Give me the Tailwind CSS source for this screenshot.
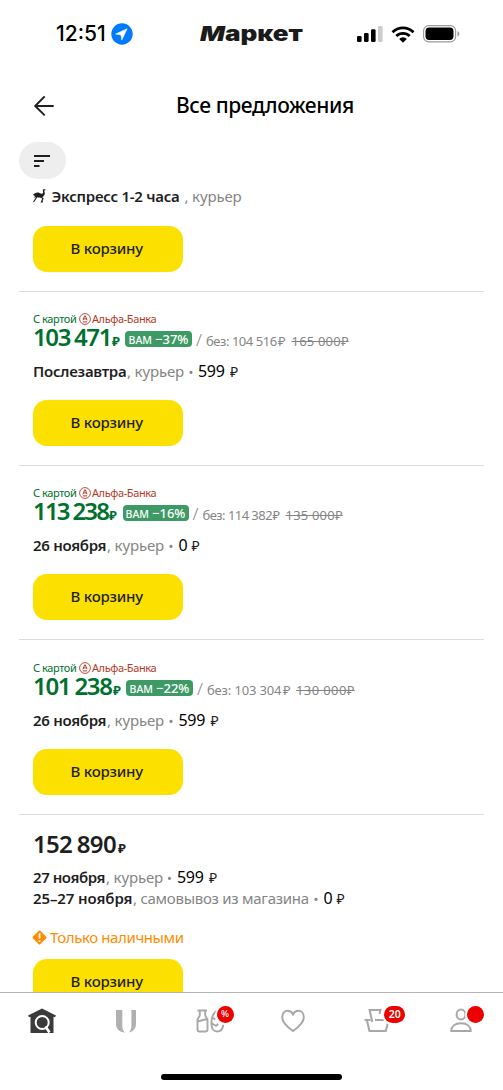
<!DOCTYPE html>
<html lang="ru">
<head>
<meta charset="utf-8">
<title>Все предложения</title>
<script src="https://cdn.jsdelivr.net/npm/@tailwindcss/browser@4"></script>
</head>
<body class="bg-white">
<svg class="hidden">
  <symbol id="alfa" viewBox="0 0 12 12"><circle cx="6" cy="6" r="5.4" fill="none" stroke="#b23a28" stroke-width=".9"/><path d="M4 7.3 5.6 2.9h.8L8 7.3M4.6 5.9h2.8M3.8 8.9h4.4" fill="none" stroke="#b23a28" stroke-width="1"/></symbol>
</svg>
<div class="flex h-[1090px] w-[503px] flex-col overflow-hidden bg-white font-['Noto_Sans',sans-serif] whitespace-nowrap text-[#1f1f1f]">

  <!-- Status bar -->
  <header class="flex h-[68px] shrink-0 items-center text-black">
    <div class="flex w-[200px] items-center pl-14">
      <span class="w-[55px] font-['Inter',sans-serif] text-[21px] font-medium">12:51</span>
      <svg class="size-[22px]" viewBox="0 0 22 22"><circle cx="11" cy="11" r="10.7" fill="#007aff"/><path d="M16.1 5.8 4.7 11l5.3.9.8 5.2z" fill="#fff" stroke="#fff" stroke-linejoin="round" stroke-width=".6"/></svg>
    </div>
    <div class="w-[157px]"><span class="inline-block origin-left scale-x-[1.27] font-['Inter',sans-serif] text-[20.5px] font-black text-[#1b1b1b]"><i>М</i>аркет</span></div>
    <div class="flex items-center">
      <svg class="mr-2 h-4 w-[26px]" viewBox="0 0 26 16"><rect x="0" y="10" width="4.6" height="6" rx="1.3"/><rect x="7" y="7" width="4.6" height="9" rx="1.3"/><rect x="14" y="3.3" width="4.6" height="12.7" rx="1.3"/><rect x="21" y="0" width="4.6" height="16" rx="1.3" fill="#ccc"/></svg>
      <svg class="mr-2 h-[17px] w-6" viewBox="0 0 24 17"><g fill="none" stroke="#000" stroke-width="2.8"><path d="M1.5 6.2a15 15 0 0 1 21 0"/><path d="M5.3 10a9.6 9.6 0 0 1 13.4 0"/></g><path d="M8.2 12.9a5.4 5.4 0 0 1 7.6 0L12 16.8z"/></svg>
      <svg class="h-[18px] w-[37px]" viewBox="0 0 37 18"><rect x=".6" y=".6" width="32" height="16.3" rx="5.2" fill="none" stroke="#999" stroke-width="1.1"/><rect x="2.5" y="2.6" width="28" height="12.3" rx="3.6"/><path d="M34.5 6v5.4c1-.4 1.8-1.4 1.8-2.7S35.5 6.4 34.5 6z" fill="#999"/></svg>
    </div>
  </header>

  <!-- Title bar -->
  <div class="flex h-[74px] shrink-0 items-center pt-0.5 pl-[33px]">
    <svg class="size-[22px]" viewBox="0 0 22 22" fill="none" stroke="#1f1f1f" stroke-width="1.9"><path d="M11.7 1.3 2.200 11l9.500 9.400M2 11h18.700" stroke-linejoin="round"/></svg>
    <h1 class="w-[400px] pl-[121px] text-[21px] font-medium tracking-[-0.4px] text-black">Все предложения</h1>
  </div>
  <div class="flex h-[37px] shrink-0 pl-[18.5px]">
    <button class="flex h-[37px] w-[47px] items-center justify-center rounded-full bg-[#eee]"><svg class="h-3 w-4" viewBox="0 0 16 12" fill="#1f1f1f"><rect y="0" width="16" height="2"/><rect y="5" width="10" height="2"/><rect y="10" width="5.5" height="2"/></svg></button>
  </div>

  <main class="flex min-h-0 grow flex-col overflow-hidden px-[19px]">
    <section class="h-[113px] shrink-0 border-b border-[#dcdcdc] px-3.5 pt-[7px]">
      <div class="flex h-5 items-center text-[15px]">
        <svg class="mr-[5px] h-[14px] w-[13.5px]" viewBox="0 0 27 28" fill="#1f1f1f"><path d="M0 12c3-4 8-6 13-4 3 1.500 6 2 7 0 1-2-.5-3-.5-5.500C19.500.500 22 0 23.500.700L26 2l-3.500 1c0 2 1.500 3.500 1 7-1 4-4 6.500-8 7-3 .5-6 0-8-1l-6 1.500 3-3-4-.5 3-1.500z"/><path d="m8 15-3 5-4 6M14 15l6 4-3 7h3" fill="none" stroke="#1f1f1f" stroke-width="2.4"/></svg>
        <b class="w-[133px] font-semibold tracking-[-0.28px]">Экспресс 1-2 часа</b><span class="tracking-[-0.15px] text-[#858585]">, курьер</span>
      </div>
      <button class="mt-[20px] flex h-[46px] w-[149.5px] items-center justify-center rounded-[14px] bg-[#fce000] pr-0.5 pb-0.5 text-[15px] font-medium tracking-[-0.2px]">В корзину</button>
    </section>

    <section class="h-[174px] shrink-0 border-b border-[#dcdcdc] px-3.5 pt-5">
      <div class="flex h-3.5 items-center text-[11px] tracking-[-0.4px]"><span class="w-[46px] text-[#00702e]">С картой</span><svg class="mr-px size-3"><use href="#alfa"/></svg><span class="text-[#b23a28]">Альфа-Банка</span></div>
      <div class="-mt-px flex h-6 items-baseline leading-6">
        <b class="w-[79px] text-[24px] font-semibold tracking-[-1.4px] [word-spacing:-0.8px] text-[#00702e]">103 471</b><b class="w-[13px] text-[13px] font-bold text-[#00702e]">₽</b>
        <span class="flex h-4 w-[67px] -translate-y-0.5 items-baseline justify-center gap-[3px] rounded bg-[#3d9a65] text-[13px] leading-4 font-medium text-white"><span class="text-[10.5px]">ВАМ</span>−37%</span>
        <span class="w-3.5 pl-1 text-[17px] font-light text-[#858585]">/</span><span class="w-[72px] text-[13px] tracking-[-0.45px] text-[#858585]">без: 104 516</span><span class="w-[13.5px] text-[13px] text-[#858585]">₽</span><s class="text-[13px] tracking-[0.2px] text-[#858585]">165 000₽</s>
      </div>
      <div class="mt-3 flex h-5 items-baseline text-[15px] leading-5"><b class="w-[94px] font-semibold tracking-[-0.25px]">Послезавтра</b><span class="w-[61.5px] tracking-[-0.15px] text-[#858585]">, курьер</span><span class="w-[9.5px] text-[13px] text-[#858585]">•</span><span class="w-[32px] text-[16px] tracking-[-0.3px] text-black">599</span><span class="text-[14px]">₽</span></div>
      <button class="mt-[19px] flex h-[46px] w-[149.5px] items-center justify-center rounded-[14px] bg-[#fce000] pr-0.5 pb-0.5 text-[15px] font-medium tracking-[-0.2px]">В корзину</button>
    </section>

    <section class="h-[174px] shrink-0 border-b border-[#dcdcdc] px-3.5 pt-5">
      <div class="flex h-3.5 items-center text-[11px] tracking-[-0.4px]"><span class="w-[46px] text-[#00702e]">С картой</span><svg class="mr-px size-3"><use href="#alfa"/></svg><span class="text-[#b23a28]">Альфа-Банка</span></div>
      <div class="-mt-px flex h-6 items-baseline leading-6">
        <b class="w-[76px] text-[24px] font-semibold tracking-[-1.8px] [word-spacing:-0.8px] text-[#00702e]">113 238</b><b class="w-[13.5px] text-[13px] font-bold text-[#00702e]">₽</b>
        <span class="flex h-4 w-[66px] -translate-y-0.5 items-baseline justify-center gap-[3px] rounded bg-[#3d9a65] text-[13px] leading-4 font-medium text-white"><span class="text-[10.5px]">ВАМ</span>−16%</span>
        <span class="w-3.5 pl-1 text-[17px] font-light text-[#858585]">/</span><span class="w-[70px] text-[13px] tracking-[-0.55px] text-[#858585]">без: 114 382</span><span class="w-[13px] text-[13px] text-[#858585]">₽</span><s class="text-[13px] tracking-[0.2px] text-[#858585]">135 000₽</s>
      </div>
      <div class="mt-3 flex h-5 items-baseline text-[15px] leading-5"><b class="w-[74px] font-semibold tracking-[-0.3px]">26 ноября</b><span class="w-[61.5px] tracking-[-0.15px] text-[#858585]">, курьер</span><span class="w-[10px] text-[13px] text-[#858585]">•</span><span class="w-[13px] text-[16px] text-black">0</span><span class="text-[14px]">₽</span></div>
      <button class="mt-[19px] flex h-[46px] w-[149.5px] items-center justify-center rounded-[14px] bg-[#fce000] pr-0.5 pb-0.5 text-[15px] font-medium tracking-[-0.2px]">В корзину</button>
    </section>

    <section class="h-[175px] shrink-0 border-b border-[#dcdcdc] px-3.5 pt-[21px]">
      <div class="flex h-3.5 items-center text-[11px] tracking-[-0.4px]"><span class="w-[46px] text-[#00702e]">С картой</span><svg class="mr-px size-3"><use href="#alfa"/></svg><span class="text-[#b23a28]">Альфа-Банка</span></div>
      <div class="-mt-px flex h-6 items-baseline leading-6">
        <b class="w-[80px] text-[24px] font-semibold tracking-[-1.3px] [word-spacing:-0.8px] text-[#00702e]">101 238</b><b class="w-[13px] text-[13px] font-bold text-[#00702e]">₽</b>
        <span class="flex h-4 w-[67px] -translate-y-0.5 items-baseline justify-center gap-[3px] rounded bg-[#3d9a65] text-[13px] leading-4 font-medium text-white"><span class="text-[10.5px]">ВАМ</span>−22%</span>
        <span class="w-3.5 pl-1 text-[17px] font-light text-[#858585]">/</span><span class="w-[76px] text-[13px] tracking-[-0.15px] text-[#858585]">без: 103 304</span><span class="w-[13px] text-[13px] text-[#858585]">₽</span><s class="text-[13px] tracking-[0.4px] text-[#858585]">130 000₽</s>
      </div>
      <div class="mt-3 flex h-5 items-baseline text-[15px] leading-5"><b class="w-[74px] font-semibold tracking-[-0.3px]">26 ноября</b><span class="w-[61.5px] tracking-[-0.15px] text-[#858585]">, курьер</span><span class="w-[10px] text-[13px] text-[#858585]">•</span><span class="w-[32px] text-[16px] tracking-[-0.3px] text-black">599</span><span class="text-[14px]">₽</span></div>
      <button class="mt-[19px] flex h-[46px] w-[149.5px] items-center justify-center rounded-[14px] bg-[#fce000] pr-0.5 pb-0.5 text-[15px] font-medium tracking-[-0.2px]">В корзину</button>
    </section>

    <section class="shrink-0 px-3.5 pt-[17px]">
      <div class="flex h-6 items-baseline leading-6"><b class="w-[85px] text-[24px] font-semibold tracking-[-0.7px] [word-spacing:-0.8px]">152 890</b><b class="text-[13px]">₽</b></div>
      <div class="mt-[11px] flex h-[21px] items-baseline text-[15px] leading-[21px]"><b class="w-[73px] font-semibold tracking-[-0.45px]">27 ноября</b><span class="w-[61px] tracking-[-0.15px] text-[#858585]">, курьер</span><span class="w-[10px] text-[13px] text-[#858585]">•</span><span class="w-[32px] text-[16px] tracking-[-0.3px] text-black">599</span><span class="text-[14px]">₽</span></div>
      <div class="flex h-[21px] items-baseline text-[15px] leading-[21px]"><b class="w-[100px] font-semibold tracking-[-0.1px]">25–27 ноября</b><span class="w-[180.5px] tracking-[-0.27px] text-[#858585]">, самовывоз из магазина</span><span class="w-[10px] text-[13px] text-[#858585]">•</span><span class="w-[13px] text-[16px] text-black">0</span><span class="text-[14px]">₽</span></div>
      <div class="mt-[18px] flex h-5 items-center text-[15px] text-[#ff8c00]"><svg class="mr-[3px] -ml-px size-[15px]" viewBox="0 0 14 14"><rect x="2.1" y="2.1" width="9.8" height="9.8" rx="1" transform="rotate(45 7 7)" fill="#ff8c00"/><path d="M7 3v5M7 9.500v1.700" stroke="#fff" stroke-width="1.700"/></svg><span class="tracking-[-0.4px]">Только наличными</span></div>
      <button class="mt-3 flex h-[46px] w-[149.5px] items-center justify-center rounded-[14px] bg-[#fce000] pr-0.5 pb-0.5 text-[15px] font-medium tracking-[-0.2px]">В корзину</button>
    </section>
  </main>

  <!-- Tab bar -->
  <nav class="flex h-[98px] shrink-0 flex-col items-center justify-between border-t border-[#b5b5b5] bg-white pb-[10px]">
    <div class="grid h-[56px] w-full grid-cols-6 place-items-center">
      <svg class="h-[26px] w-7" viewBox="0 0 28 26"><path d="M14 .5 28 7.500l-1 1.700-1.500-.5V25h-23V8.700L1 9.200 0 7.500z" fill="#3b3b3b"/><circle cx="14.200" cy="14.500" r="6.500" fill="none" stroke="#fff" stroke-width="2"/><path d="m17.500 18.500 4 6" stroke="#fff" stroke-width="2.600"/></svg>
      <svg class="h-[26px] w-5" viewBox="0 0 20 26" fill="#b0b0b0"><path d="M0 2h6.300v15c0 3.300.5 5.500 2.500 7.500C3.500 24.300 0 21 0 15.500zM20 2h-4.600v15c0 3.300-.6 5.500-2.600 7.500 4.700-.8 7.200-4 7.200-9z"/></svg>
      <div class="relative h-[26px] w-7">
        <svg class="h-[26px] w-7" viewBox="0 0 28 26" fill="none" stroke="#a8a8a8" stroke-width="1.900"><path d="M1.500 2.500h9.500M3.800 3v4.500L1.500 11.500v10q0 2 2 2h6q2 0 2-2v-10L9.200 7.500V3M1.500 13.500l9.500-2.500"/><path d="M20 3c-3.800 4-4.900 8-4.600 13 .2 5 2.600 7.500 5.900 7.500s5.500-2.500 6-7M15.300 9l4 2.500M15.300 15l4 2.500m3-1.500-3 2.500"/></svg>
        <span class="absolute -top-0.5 left-[21px] flex size-[17px] items-center justify-center rounded-full bg-[#ec0000] text-[9.5px] font-medium text-white ring-2 ring-white">%</span>
      </div>
      <svg class="h-[26px] w-6" viewBox="0 0 24 26" fill="none" stroke="#a8a8a8" stroke-width="2"><path d="M12 23C7 19.500 1.200 14.800 1.200 9.200c0-3.600 2.200-6.400 5.400-6.400 2.400 0 4.200 1.200 5.400 3.500 1.200-2.300 3-3.500 5.400-3.500 3.200 0 5.400 2.800 5.400 6.400 0 5.600-5.800 10.300-10.800 13.800z"/></svg>
      <div class="relative h-[26px] w-7">
        <svg class="h-[26px] w-7" viewBox="0 0 28 26" fill="none" stroke="#a8a8a8" stroke-width="2"><path d="M1.500 12h6M12 12h15M4 12.500 6.400 23h16.400L25 14.500M9.300 14 6.600 2h10.900l-1 4"/></svg>
        <span class="absolute -top-0.5 left-[21px] flex h-[17px] w-[21px] items-center justify-center rounded-full bg-[#ec0000] text-[10.5px] font-semibold text-white ring-2 ring-white">20</span>
      </div>
      <div class="relative h-[26px] w-7">
        <svg class="h-[26px] w-7" viewBox="0 0 28 26" fill="none" stroke="#a8a8a8" stroke-width="2"><ellipse cx="14" cy="6.500" rx="4.400" ry="5"/><path d="M4.300 23h19.400c0-4.500-3.500-7.700-9.700-7.700S4.300 18.500 4.300 23z"/></svg>
        <span class="absolute -top-0.5 left-5 size-[17px] rounded-full bg-[#ec0000] ring-2 ring-white"></span>
      </div>
    </div>
    <div class="h-1.5 w-[181px] rounded-full bg-black"></div>
  </nav>
</div>
</body>
</html>
